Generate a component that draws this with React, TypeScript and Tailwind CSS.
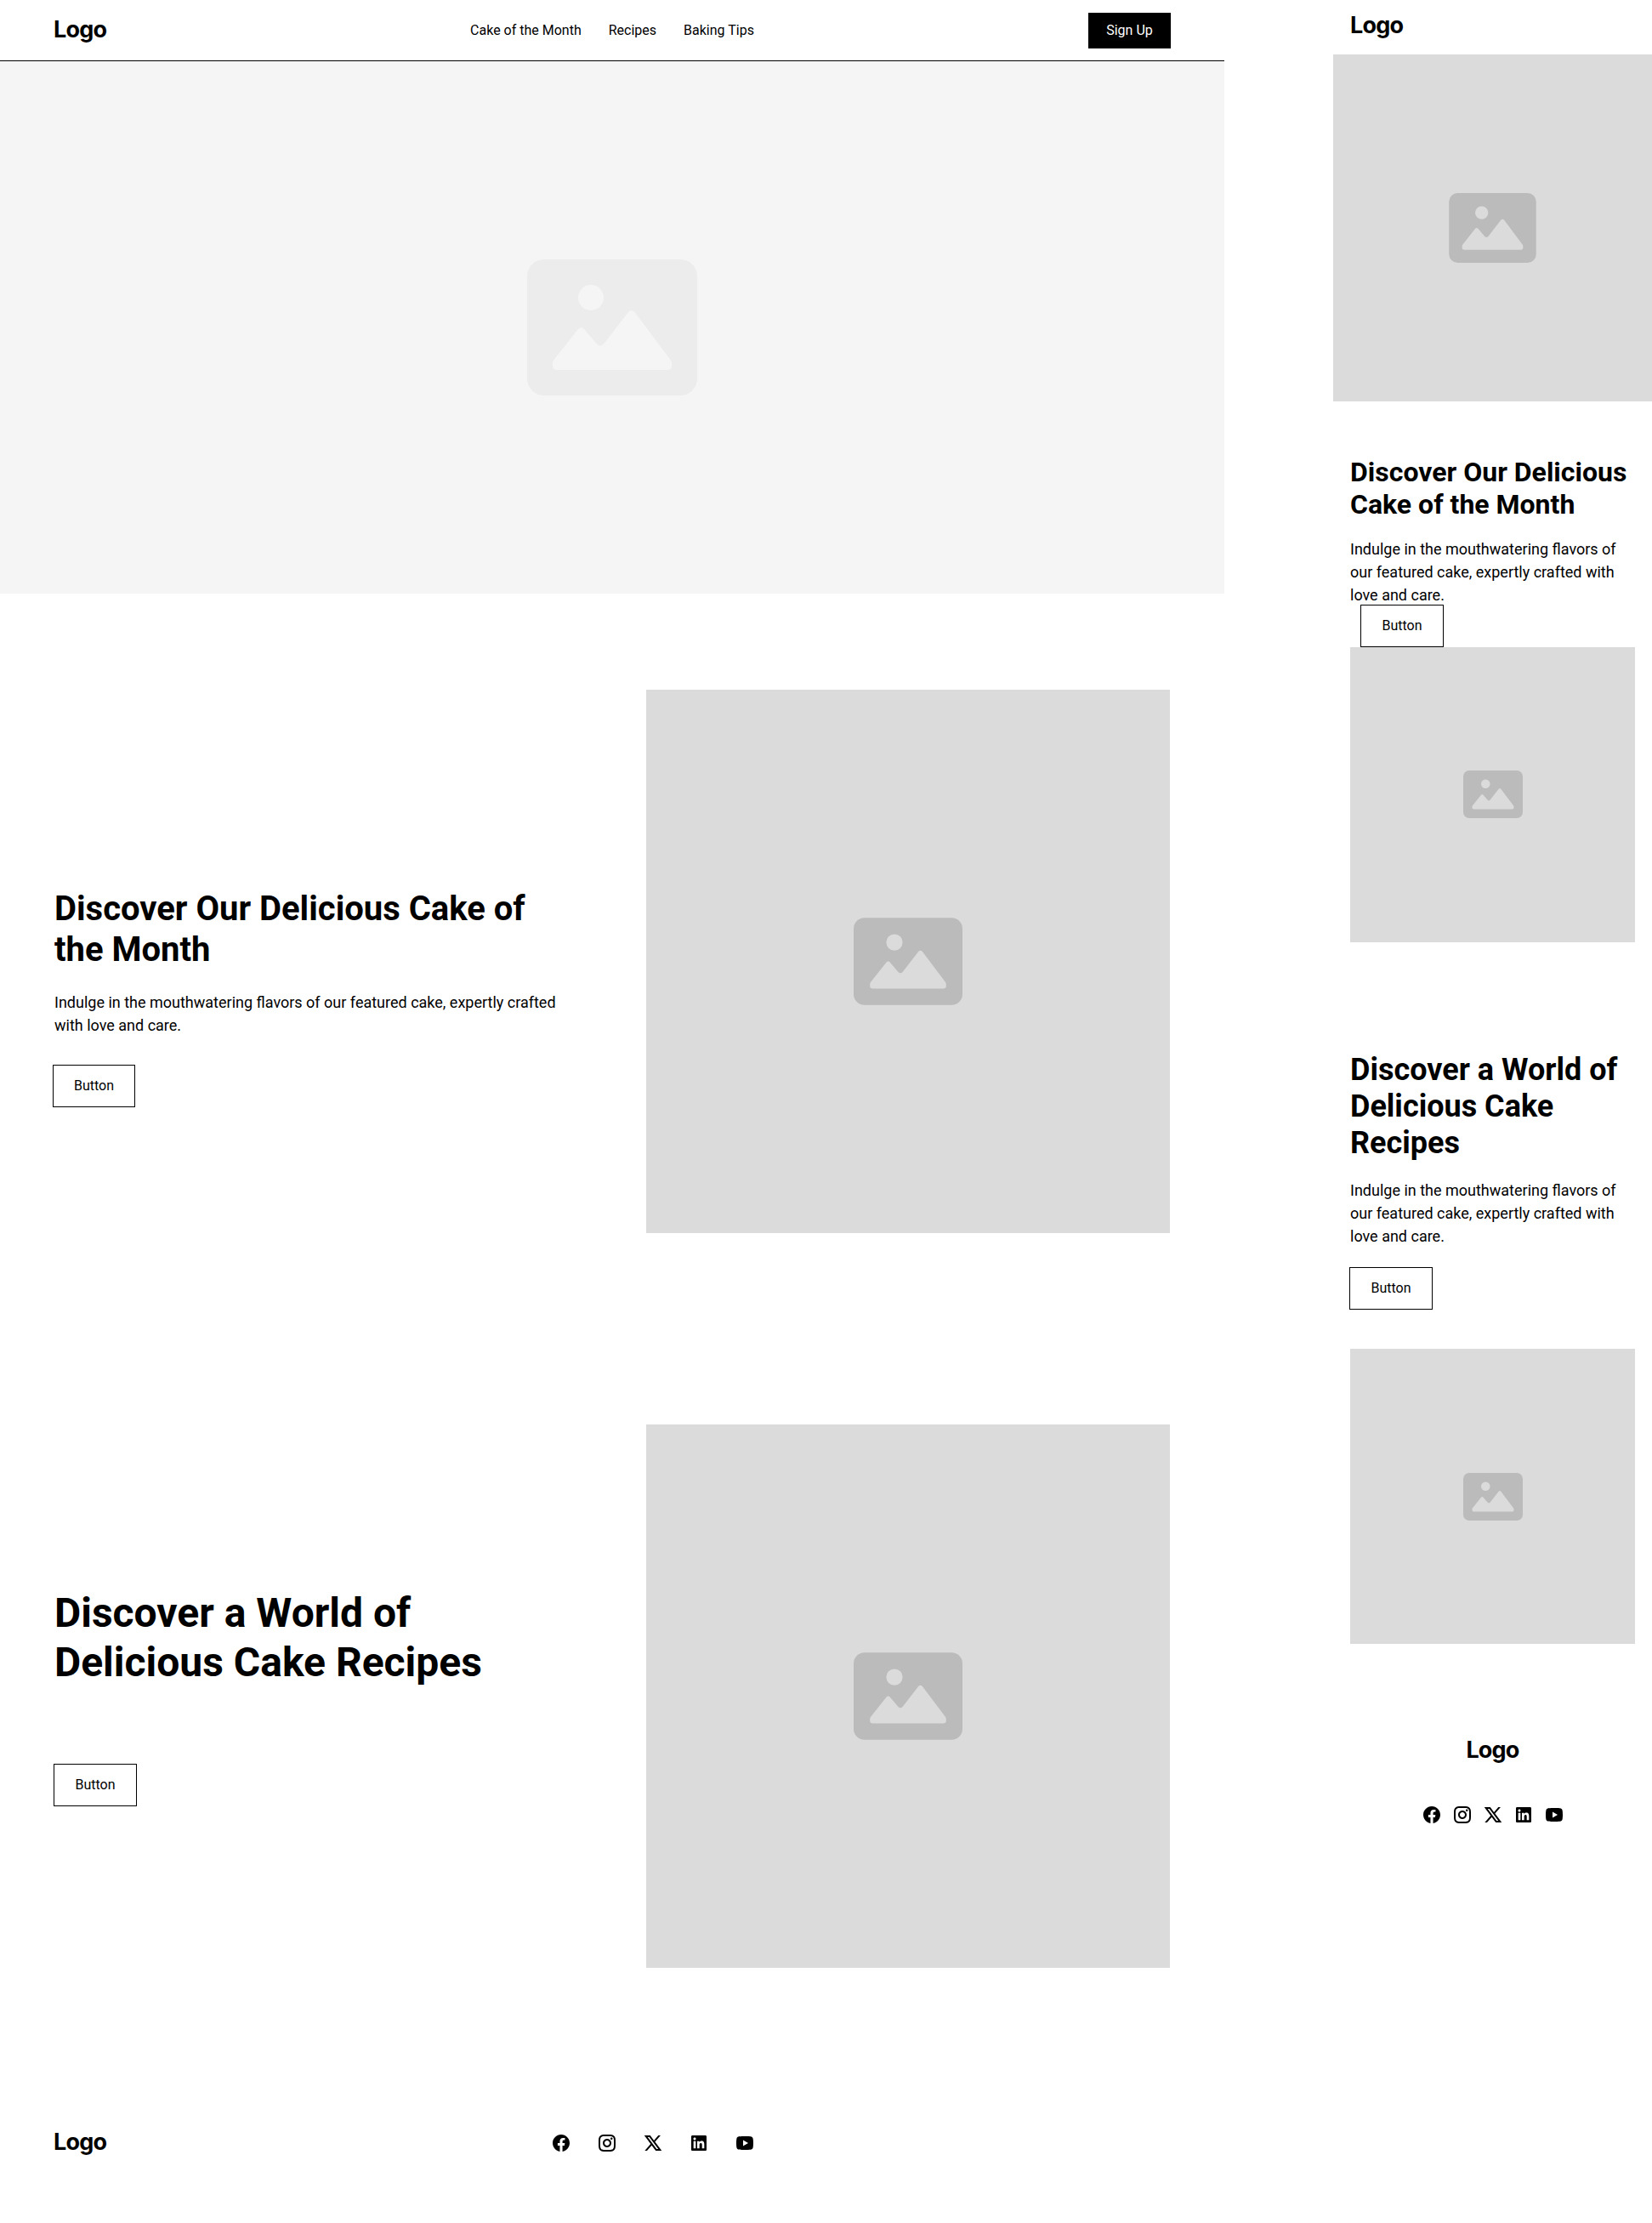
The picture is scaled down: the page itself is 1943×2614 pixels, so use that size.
import { RiFacebookCircleFill, RiInstagramLine, RiTwitterXLine, RiLinkedinBoxFill, RiYoutubeFill } from "react-icons/ri";

const sans = "font-['Roboto',sans-serif]";

function PlaceholderIcon({ className, box, fill }: { className: string; box: string; fill: string }) {
  return (
    <svg viewBox="0 0 200 160" className={className} aria-hidden="true">
      <rect width="200" height="160" rx="20" className={box} />
      <circle cx="75" cy="45" r="15" className={fill} />
      <path
        className={fill}
        d="M31.5 118 L60 82 Q63.5 78 67 82 L82 99.5 Q85.7 103.5 90 99.5 L119 62 Q122.7 58 126.5 62 L168.5 118 Q170 120 170 122 L170 125 Q170 130 165 130 L35 130 Q30 130 30 125 L30 122 Q30 120 31.5 118 Z"
      />
    </svg>
  );
}

function Logo() {
  return <span className="font-['Inter',sans-serif] text-[27px] leading-[32px] font-bold tracking-[-0.03em] text-black">Logo</span>;
}

function Socials({ className }: { className: string }) {
  return (
    <div className={className}>
      <RiFacebookCircleFill className="h-6 w-6" />
      <RiInstagramLine className="h-6 w-6" />
      <RiTwitterXLine className="h-6 w-6" />
      <RiLinkedinBoxFill className="h-6 w-6" />
      <RiYoutubeFill className="h-6 w-6" />
    </div>
  );
}

function Button({ className }: { className: string }) {
  return (
    <button className={`flex h-[50px] items-center justify-center border border-black bg-white text-base text-black ${className}`}>
      Button
    </button>
  );
}

function ImageBlock({ className, icon }: { className: string; icon: string }) {
  return (
    <div className={`flex items-center justify-center bg-[#dbdbdb] ${className}`}>
      <PlaceholderIcon className={icon} box="fill-[#bbbbbb]" fill="fill-[#dbdbdb]" />
    </div>
  );
}

const body = "Indulge in the mouthwatering flavors of our featured cake, expertly crafted with love and care.";

function Desktop() {
  return (
    <div className="flex w-[1440px] shrink-0 flex-col">
      <header className="grid h-[72px] grid-cols-[1fr_auto_1fr] items-center border-b border-black pl-[63px] pr-[63px]">
        <div className="pb-[2px]"><Logo /></div>
        <nav className="flex gap-8 text-base text-black">
          <a>Cake of the Month</a>
          <a>Recipes</a>
          <a>Baking Tips</a>
        </nav>
        <div className="flex justify-end">
          <button className="flex h-[42px] w-[97px] items-center justify-center bg-black text-base text-white">Sign Up</button>
        </div>
      </header>

      <div className="flex h-[626px] items-center justify-center bg-[#f5f5f5]">
        <PlaceholderIcon className="h-[160px] w-[200px]" box="fill-[#ececec]" fill="fill-[#f5f5f5]" />
      </div>

      <section className="grid grid-cols-[616px_616px] gap-[80px] px-[64px] py-[112.5px]">
        <div className="flex flex-col justify-center pt-[87px]">
          <h2 className="text-[40px] leading-[48px] font-bold text-black">Discover Our Delicious Cake of the Month</h2>
          <p className="mt-[24px] text-lg leading-[27px] text-black">{body}</p>
          <Button className="mt-[33px] -ml-[2px] w-[97px]" />
        </div>
        <ImageBlock className="h-[639px]" icon="h-[103px] w-[128px]" />
      </section>

      <section className="grid grid-cols-[616px_616px] gap-[80px] px-[64px] py-[112.5px]">
        <div className="flex flex-col justify-center pt-[3px]">
          <h2 className="text-[48px] leading-[58px] font-bold text-black">Discover a World of Delicious Cake Recipes</h2>
          <Button className="mt-[90px] -ml-[1px] w-[98px]" />
        </div>
        <ImageBlock className="h-[639px]" icon="h-[103px] w-[128px]" />
      </section>

      <footer className="grid grid-cols-[585px_240px] items-center pl-[63px] pt-[78px] pb-[76px]">
        <div className="-mt-[1px]"><Logo /></div>
        <Socials className="flex justify-between text-black" />
      </footer>
    </div>
  );
}

function Mobile() {
  return (
    <div className="flex w-[375px] shrink-0 flex-col">
      <div className="flex h-[64px] items-center pb-[4px] pl-[20px]"><Logo /></div>
      <ImageBlock className="h-[408px]" icon="h-[82px] w-[103px]" />

      <section className="px-[20px] pt-[64px]">
        <h2 className="text-[32px] leading-[38.4px] font-bold text-black">Discover Our Delicious Cake of the Month</h2>
        <p className="mt-[19px] text-lg leading-[27px] text-black">{body}</p>
        <Button className="ml-[12px] -mt-[2px] w-[98px]" />
        <ImageBlock className="h-[347px]" icon="h-[56px] w-[70px]" />
      </section>

      <section className="px-[20px] pt-[129px]">
        <h2 className="text-[36px] leading-[43.2px] font-bold text-black">Discover a World of Delicious Cake Recipes</h2>
        <p className="mt-[20px] text-lg leading-[27px] text-black">{body}</p>
        <Button className="mt-[23px] -ml-[1px] w-[98px]" />
        <ImageBlock className="mt-[46px] h-[347px]" icon="h-[56px] w-[70px]" />
      </section>

      <footer className="flex flex-col items-center pt-[109px]">
        <Logo />
        <Socials className="mt-[48px] flex gap-3 text-black" />
      </footer>
    </div>
  );
}

export default function App() {
  return (
    <div className={`flex w-[1943px] gap-[128px] bg-white ${sans}`}>
      <Desktop />
      <Mobile />
    </div>
  );
}
